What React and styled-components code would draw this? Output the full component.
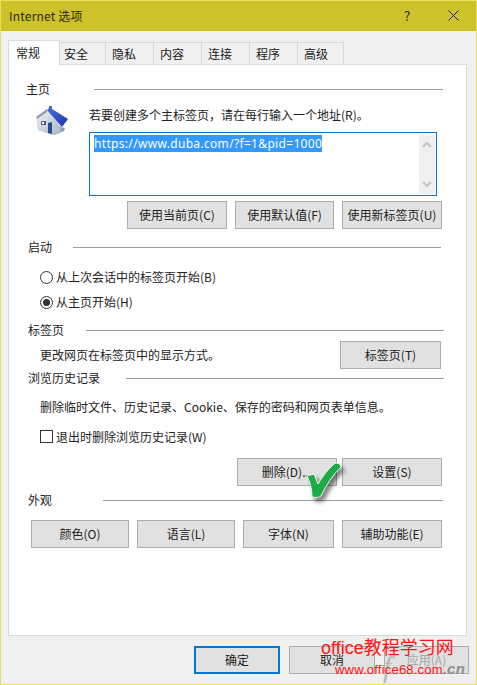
import React from 'react';
import styled, { createGlobalStyle } from 'styled-components';

const GlobalStyle = createGlobalStyle`
  html, body {
    margin: 0;
    padding: 0;
    background: #f0f0f0;
  }
  body {
    font-family: "Noto Sans CJK SC", "Liberation Sans", sans-serif;
    font-size: 12px;
    color: #1a1a1a;
  }
`;

const Dialog = styled.div`
  position: relative;
  box-sizing: border-box;
  width: 477px;
  height: 685px;
  background: #f0f0f0;
  border: 1px solid #e9df5e;
  display: flex;
  flex-direction: column;
  overflow: hidden;
`;

const TitleBar = styled.div`
  height: 30px;
  flex-shrink: 0;
  background: #cdc229;
  display: flex;
  align-items: center;
  padding: 0 0 2px 8px;
  box-sizing: border-box;
  color: #2b2a10;
  font-size: 12px;
`;

const TitleText = styled.span`
  flex: 1;
  letter-spacing: 0.2px;
`;

const TitleButton = styled.div`
  width: ${props => props.$w}px;
  display: flex;
  align-items: center;
  justify-content: center;
  font-size: 13px;
  color: #222;
`;

const Body = styled.div`
  flex: 1;
  display: flex;
  flex-direction: column;
  padding: 9px 9px 0 7px;
`;

const TabRow = styled.div`
  display: flex;
  align-items: flex-start;
  height: 24px;
  position: relative;
  z-index: 1;
`;

const Tab = styled.div`
  box-sizing: border-box;
  width: ${props => props.$w}px;
  height: ${props => (props.$active ? 25 : 22)}px;
  margin-top: ${props => (props.$active ? 0 : 2)}px;
  padding-left: ${props => props.$pad}px;
  padding-bottom: ${props => (props.$active ? 2 : 0)}px;
  display: flex;
  align-items: center;
  background: ${props => (props.$active ? '#fff' : '#f0f0f0')};
  border-top: 1px solid #d9d9d9;
  border-right: 1px solid #d9d9d9;
  border-left: ${props => (props.$active ? '1px solid #d9d9d9' : 'none')};
  font-size: 12px;
  color: #1a1a1a;
`;

const Panel = styled.div`
  box-sizing: border-box;
  width: 459px;
  height: 572px;
  flex-shrink: 0;
  background: #fff;
  border: 1px solid #d9d9d9;
  padding: 15px 0 0 17px;
`;

const GroupHead = styled.div`
  box-sizing: border-box;
  display: flex;
  align-items: center;
  height: 18px;
  padding-bottom: 2px;
  margin-top: ${props => props.$top || 0}px;
  margin-left: ${props => props.$indent || 0}px;
  width: ${props => props.$width}px;
  font-size: 12px;
  color: #222;
`;

const GroupRule = styled.div`
  flex: 1;
  height: 1px;
  background: #a0a0a0;
  margin-top: 2px;
  margin-left: ${props => props.$gap}px;
`;

const HomeRow = styled.div`
  display: flex;
  margin-top: 8px;
`;

const HomeIconWrap = styled.div`
  width: 63px;
  padding-left: 8px;
  box-sizing: border-box;
  flex-shrink: 0;
`;

const HomeColumn = styled.div`
  display: flex;
  flex-direction: column;
`;

const HomeHint = styled.div`
  height: 18px;
  line-height: 18px;
  color: #222;
`;

const UrlBox = styled.div`
  box-sizing: border-box;
  width: 348px;
  height: 64px;
  margin-top: 8px;
  border: 1px solid #0078d7;
  display: flex;
  justify-content: space-between;
  padding: 2px 1px 1px 4px;
`;

const UrlText = styled.span`
  align-self: flex-start;
  background: #3399ff;
  color: #fff;
  height: 17px;
  line-height: 17px;
  font-size: 12px;
  font-family: "Noto Sans", "Liberation Sans", sans-serif;
  letter-spacing: 0.32px;
`;

const ScrollTrack = styled.div`
  width: 16px;
  background: #f0f0f0;
  display: flex;
  flex-direction: column;
  justify-content: space-between;
  align-items: center;
  padding: 6px 0;
  box-sizing: border-box;
`;

const ButtonRow = styled.div`
  display: flex;
  gap: ${props => props.$gap || 8}px;
  margin-top: ${props => props.$top || 0}px;
  margin-left: ${props => props.$indent || 0}px;
`;

const Button = styled.div`
  box-sizing: border-box;
  width: ${props => props.$w}px;
  height: 28px;
  flex-shrink: 0;
  display: flex;
  align-items: center;
  justify-content: center;
  padding-bottom: 2px;
  background: #e1e1e1;
  border: ${props => (props.$primary ? '2px solid #0078d7' : '1px solid #adadad')};
  color: ${props => (props.$disabled ? '#a6a6a6' : '#222')};
  font-size: 12px;
  white-space: nowrap;
`;

const OptionRow = styled.label`
  box-sizing: border-box;
  display: flex;
  align-items: center;
  gap: 3px;
  height: 18px;
  padding-bottom: 2px;
  margin-top: ${props => props.$top}px;
  margin-left: 14px;
  color: #222;
`;

const Radio = styled.span`
  box-sizing: border-box;
  width: 13px;
  height: 13px;
  margin-top: 2px;
  border: 1px solid #333;
  border-radius: 50%;
  background: #fff;
  display: flex;
  align-items: center;
  justify-content: center;
  &::after {
    content: '';
    display: ${props => (props.$checked ? 'block' : 'none')};
    width: 7px;
    height: 7px;
    border-radius: 50%;
    background: #333;
  }
`;

const Checkbox = styled.span`
  box-sizing: border-box;
  width: 13px;
  height: 13px;
  border: 1px solid #333;
  background: #fff;
`;

const TabsRow = styled.div`
  display: flex;
  justify-content: space-between;
  align-items: center;
  width: 401px;
  margin-left: 14px;
  height: 28px;
  margin-top: 2px;
  color: #222;
`;

const TabsNote = styled.span`
  margin-bottom: 2px;
`;

const Note = styled.div`
  height: 18px;
  line-height: 18px;
  margin-top: ${props => props.$top}px;
  margin-left: 14px;
  color: #222;
`;

const Footer = styled.div`
  display: flex;
  margin-top: 10px;
  margin-left: 186px;
  gap: 9px;
`;

const Mark = styled.svg`
  position: absolute;
  left: 299px;
  top: 454px;
  filter: drop-shadow(3px 4px 2px rgba(0, 0, 0, 0.5));
`;

const Watermark = styled.div`
  position: absolute;
  left: 320px;
  top: 635px;
  width: 155px;
  height: 48px;
  pointer-events: none;
`;

const WatermarkGhost = styled.span`
  position: absolute;
  left: 62px;
  top: 14px;
  color: #b9b9b9;
  font-size: 30px;
  line-height: 34px;
  font-style: italic;
  font-family: "Liberation Serif", serif;
`;

const WatermarkTitle = styled.div`
  position: relative;
  color: #ff1414;
  font-size: 18px;
  line-height: 24px;
  white-space: nowrap;
  font-family: "Liberation Sans", "Noto Sans CJK SC", sans-serif;
`;

const WatermarkUrl = styled.div`
  position: relative;
  color: #ff1414;
  font-size: 13px;
  line-height: 16px;
  margin-left: 14px;
  margin-top: 1px;
  white-space: nowrap;
  font-family: "Liberation Sans", sans-serif;
  letter-spacing: 0.2px;
`;

const WatermarkCn = styled.span`
  color: #8f8f8f;
  font-size: 15px;
  font-weight: bold;
  font-style: italic;
`;

const tabs = [
  { label: '常规', w: 52, pad: 7, active: true },
  { label: '安全', w: 46, pad: 4 },
  { label: '隐私', w: 48, pad: 6 },
  { label: '内容', w: 48, pad: 6 },
  { label: '连接', w: 48, pad: 6 },
  { label: '程序', w: 48, pad: 6 },
  { label: '高级', w: 46, pad: 6 },
];

function HomeIcon() {
  return (
    <svg width="36" height="30" viewBox="34 106 36 30" style={{ display: 'block' }}>
      <defs>
        <linearGradient id="homeWall" x1="0" y1="0" x2="1" y2="1">
          <stop offset="0" stopColor="#f2f4f7" />
          <stop offset="1" stopColor="#aab5c5" />
        </linearGradient>
        <linearGradient id="homeRoof" x1="0" y1="0" x2="1" y2="1">
          <stop offset="0" stopColor="#4a72e4" />
          <stop offset="1" stopColor="#1a35a6" />
        </linearGradient>
      </defs>
      <path d="M47 110 L61 127 L65 128 L64 131 L54 135 L38 130 L37 118 Z" fill="#8d9ab0" />
      <path d="M47 110 L61 127 L60 133 L54 135 L38 130 L37 118 Z" fill="url(#homeWall)" />
      <path d="M49 106 H52 V109 L68 119 L62 127 L47 110 L49 108 Z" fill="url(#homeRoof)" />
      <path d="M47 109 L36 117 L37 119 L47 112 Z" fill="#8f9bb0" />
      <rect x="41" y="121" width="5" height="4" fill="#5d626d" />
      <rect x="42" y="122" width="2" height="2" fill="#eef0f4" />
      <path d="M48 123 L52 122 V134 L48 133 Z" fill="#24508f" />
    </svg>
  );
}

function Chevron({ up }) {
  return (
    <svg width="10" height="7" viewBox="0 0 10 7">
      <path d={up ? 'M1 6 L5 2 L9 6' : 'M1 1 L5 5 L9 1'} fill="none" stroke="#c4c4c4" strokeWidth="2" />
    </svg>
  );
}

export default function App() {
  return (
    <Dialog>
      <GlobalStyle />
      <TitleBar>
        <TitleText>Internet 选项</TitleText>
        <TitleButton $w={46}>?</TitleButton>
        <TitleButton $w={46}>
          <svg width="11" height="11" viewBox="0 0 11 11">
            <path d="M0.5 0.5 L10.5 10.5 M10.5 0.5 L0.5 10.5" stroke="#222" strokeWidth="1" fill="none" />
          </svg>
        </TitleButton>
      </TitleBar>
      <Body>
        <TabRow>
          {tabs.map((t) => (
            <Tab key={t.label} $w={t.w} $pad={t.pad} $active={t.active}>{t.label}</Tab>
          ))}
        </TabRow>
        <Panel>
          <GroupHead $width={417}>
            主页
            <GroupRule $gap={44} />
          </GroupHead>
          <HomeRow>
            <HomeIconWrap><HomeIcon /></HomeIconWrap>
            <HomeColumn>
              <HomeHint>若要创建多个主标签页，请在每行输入一个地址(R)。</HomeHint>
              <UrlBox>
                <UrlText>https://www.duba.com/?f=1&amp;pid=1000</UrlText>
                <ScrollTrack>
                  <Chevron up />
                  <Chevron />
                </ScrollTrack>
              </UrlBox>
            </HomeColumn>
          </HomeRow>
          <ButtonRow $top={5} $indent={101}>
            <Button $w={100}>使用当前页(C)</Button>
            <Button $w={99}>使用默认值(F)</Button>
            <Button $w={100}>使用新标签页(U)</Button>
          </ButtonRow>
          <GroupHead $top={9} $indent={2} $width={413}>
            启动
            <GroupRule $gap={21} />
          </GroupHead>
          <OptionRow $top={12}>
            <Radio />
            从上次会话中的标签页开始(B)
          </OptionRow>
          <OptionRow $top={7}>
            <Radio $checked />
            从主页开始(H)
          </OptionRow>
          <GroupHead $top={10} $indent={2} $width={416}>
            标签页
            <GroupRule $gap={22} />
          </GroupHead>
          <TabsRow>
            <TabsNote>更改网页在标签页中的显示方式。</TabsNote>
            <Button $w={101}>标签页(T)</Button>
          </TabsRow>
          <GroupHead $top={0} $indent={2} $width={416}>
            浏览历史记录
            <GroupRule $gap={26} />
          </GroupHead>
          <Note $top={11}>删除临时文件、历史记录、Cookie、保存的密码和网页表单信息。</Note>
          <OptionRow $top={12}>
            <Checkbox />
            退出时删除浏览历史记录(W)
          </OptionRow>
          <ButtonRow $top={12} $indent={211} $gap={5}>
            <Button $w={100}>删除(D)...</Button>
            <Button $w={100}>设置(S)</Button>
          </ButtonRow>
          <GroupHead $top={5} $indent={2} $width={415}>
            外观
            <GroupRule $gap={51} />
          </GroupHead>
          <ButtonRow $top={11} $indent={5}>
            <Button $w={98}>颜色(O)</Button>
            <Button $w={98}>语言(L)</Button>
            <Button $w={91}>字体(N)</Button>
            <Button $w={100}>辅助功能(E)</Button>
          </ButtonRow>
        </Panel>
        <Footer>
          <Button $w={86} $primary>确定</Button>
          <Button $w={86}>取消</Button>
          <Button $w={85} $disabled>应用(A)</Button>
        </Footer>
      </Body>
      <Mark width="50" height="48" viewBox="0 0 50 48">
        <path d="M7 21 L14 19 L18 29 C22 22 28 14 34 9 C37 7 41 9 41 12 C33 20 26 30 21 41 C18 43 13 43 12 41 C12 34 10 27 7 21 Z" fill="#1cab47" stroke="#f4f4f4" strokeWidth="1" strokeLinejoin="round" />
      </Mark>
      <Watermark>
        <WatermarkGhost>f</WatermarkGhost>
        <WatermarkTitle>office教程学习网</WatermarkTitle>
        <WatermarkUrl>www.office68.com<WatermarkCn>.cn</WatermarkCn></WatermarkUrl>
      </Watermark>
    </Dialog>
  );
}
